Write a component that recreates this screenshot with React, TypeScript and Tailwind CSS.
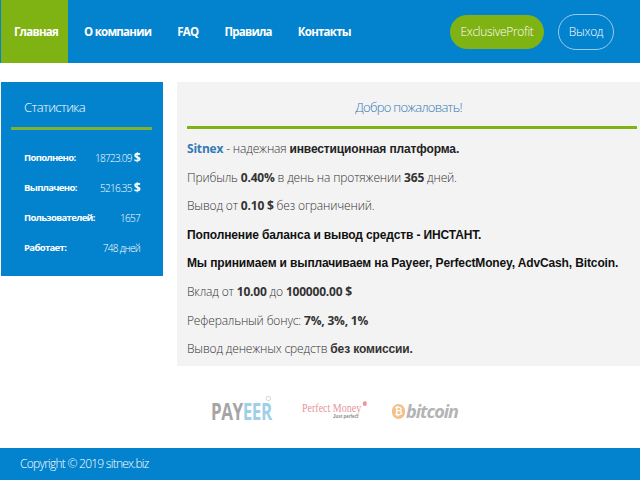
const openSans = { fontFamily: '"Open Sans", sans-serif' };

const navItems = ["О компании", "FAQ", "Правила", "Контакты"];

const stats = [
  { label: "Пополнено:", value: "18723.09", dollar: true },
  { label: "Выплачено:", value: "5216.35", dollar: true },
  { label: "Пользователей:", value: "1657", dollar: false },
  { label: "Работает:", value: "748 дней", dollar: false },
];

function Logos() {
  return (
    <div className="flex h-[82px] items-center pl-[211px] pt-[8px]">
      <div className="relative w-[91px] origin-left scale-x-[0.74] whitespace-nowrap font-['Open_Sans',sans-serif] text-[23px] font-bold leading-[16px] tracking-[-0.6px]">
        <span className="text-[#a5a5a5]">PAY</span>
        <span className="text-[#9fd0e8]">EER</span>
        <span className="absolute left-[74px] top-[-7px] h-[5px] w-[7px] rounded-full border border-[#cfcfcf]" />
      </div>
      <div className="flex w-[90px] flex-col items-start">
        <span className="relative origin-left scale-x-[0.8] whitespace-nowrap font-['Liberation_Serif',serif] text-[12.5px] leading-none text-[#e8959c]">
          Perfect Money
          <span className="absolute right-[-7px] top-[-1px] h-[5px] w-[5px] rounded-full bg-[#e8959c]" />
        </span>
        <span className="ml-[31px] font-['Liberation_Sans',sans-serif] text-[4.5px] font-bold leading-[6px] text-[#888888]">
          Just perfect
        </span>
      </div>
      <div className="flex items-center">
        <span className="flex h-[15px] w-[13px] items-center justify-center rounded-full bg-[#f2c088] font-['Liberation_Sans',sans-serif] text-[10px] font-bold text-white">
          ₿
        </span>
        <span className="ml-[1px] font-['Open_Sans',sans-serif] text-[18px] font-bold italic leading-none tracking-[-1px] text-[#b4b4b4]">
          bitcoin
        </span>
      </div>
    </div>
  );
}

export default function App() {
  return (
    <div className="flex h-[480px] w-[640px] flex-col overflow-hidden bg-white" style={openSans}>
      <header className="flex h-[63px] items-stretch bg-[#0383cd] pl-[1px]">
        <div className="flex w-[67px] items-center justify-center bg-[#7fb213] pl-[3px] text-[11.5px] font-bold tracking-[-0.75px] text-white">
          Главная
        </div>
        <nav className="ml-[16px] flex items-center gap-[26px] text-[11.5px] font-bold tracking-[-0.75px] text-white">
          {navItems.map((item) => (
            <span key={item}>{item}</span>
          ))}
        </nav>
        <div className="ml-auto flex items-center gap-[14px] pr-[26px] text-[12px] font-light tracking-[-0.3px] text-white">
          <span className="flex h-[34px] w-[94px] items-center justify-center rounded-[17px] bg-[#7fb213]">
            ExclusiveProfit
          </span>
          <span className="flex h-[36px] w-[56px] items-center justify-center rounded-[18px] border border-[#9ccbe8]">
            Выход
          </span>
        </div>
      </header>

      <div className="mt-[19px] flex items-start pl-[1px]">
        <aside className="h-[194px] w-[162px] bg-[#0383cd] pt-[15px]">
          <h2 className="pl-[23px] text-[13px] font-light leading-[20px] tracking-[-0.6px] text-white">Статистика</h2>
          <div className="ml-[10px] mt-[10px] h-[3px] w-[141px] bg-[#7fb22f]" />
          <div className="mt-[19px] flex flex-col gap-[12px] pl-[23px] pr-[23px]">
            {stats.map((row) => (
              <div key={row.label} className="flex h-[18px] items-center justify-between text-[10px] text-white">
                <span className="text-[9.5px] font-bold tracking-[-0.65px]">{row.label}</span>
                <span className="font-light tracking-[-0.7px]">
                  {row.value}
                  {row.dollar && <b className="ml-[2px] text-[12px] font-bold">$</b>}
                </span>
              </div>
            ))}
          </div>
        </aside>

        <main className="ml-[14px] h-[284px] w-[463px] bg-[#f3f3f3] pl-[10px]">
          <h1 className="pt-[15px] pr-[10px] text-center text-[13px] font-light leading-[20px] tracking-[-0.7px] text-[#337ab7]">
            Добро пожаловать!
          </h1>
          <div className="mt-[9px] h-[3px] w-[450px] bg-[#7fb213]" />
          <div className="mt-[6px] flex flex-col text-[12px] font-light leading-[28.6px] tracking-[-0.15px] text-[#333333]">
            <p>
              <b className="font-bold tracking-[-0.2px] text-[#337ab7]">Sitnex</b> - надежная{" "}
              <b className="font-['Liberation_Sans',sans-serif] font-bold tracking-[-0.13px] text-[#222222]">инвестиционная платформа.</b>
            </p>
            <p>
              Прибыль <b className="font-bold tracking-[-0.2px]">0.40%</b> в день на протяжении{" "}
              <b className="font-bold tracking-[-0.2px]">365</b> дней.
            </p>
            <p>
              Вывод от <b className="font-bold tracking-[-0.2px]">0.10 $</b> без ограничений.
            </p>
            <p className="font-['Liberation_Sans',sans-serif] font-bold tracking-[-0.13px] text-[#111111]">
              Пополнение баланса и вывод средств - ИНСТАНТ.
            </p>
            <p className="font-['Liberation_Sans',sans-serif] font-bold tracking-[-0.13px] text-[#111111]">
              Мы принимаем и выплачиваем на Payeer, PerfectMoney, AdvCash, Bitcoin.
            </p>
            <p>
              Вклад от <b className="font-bold tracking-[-0.2px]">10.00</b> до{" "}
              <b className="font-bold tracking-[-0.2px]">100000.00 $</b>
            </p>
            <p>
              Реферальный бонус: <b className="font-bold tracking-[-0.2px]">7%, 3%, 1%</b>
            </p>
            <p>
              Вывод денежных средств <b className="font-['Liberation_Sans',sans-serif] font-bold tracking-[-0.13px]">без комиссии.</b>
            </p>
          </div>
        </main>
      </div>

      <Logos />

      <footer className="mt-auto flex h-[32px] items-center bg-[#0383cd] pl-[20px] text-[12px] font-light tracking-[-0.75px] text-white">
        Copyright © 2019 sitnex.biz
      </footer>
    </div>
  );
}
